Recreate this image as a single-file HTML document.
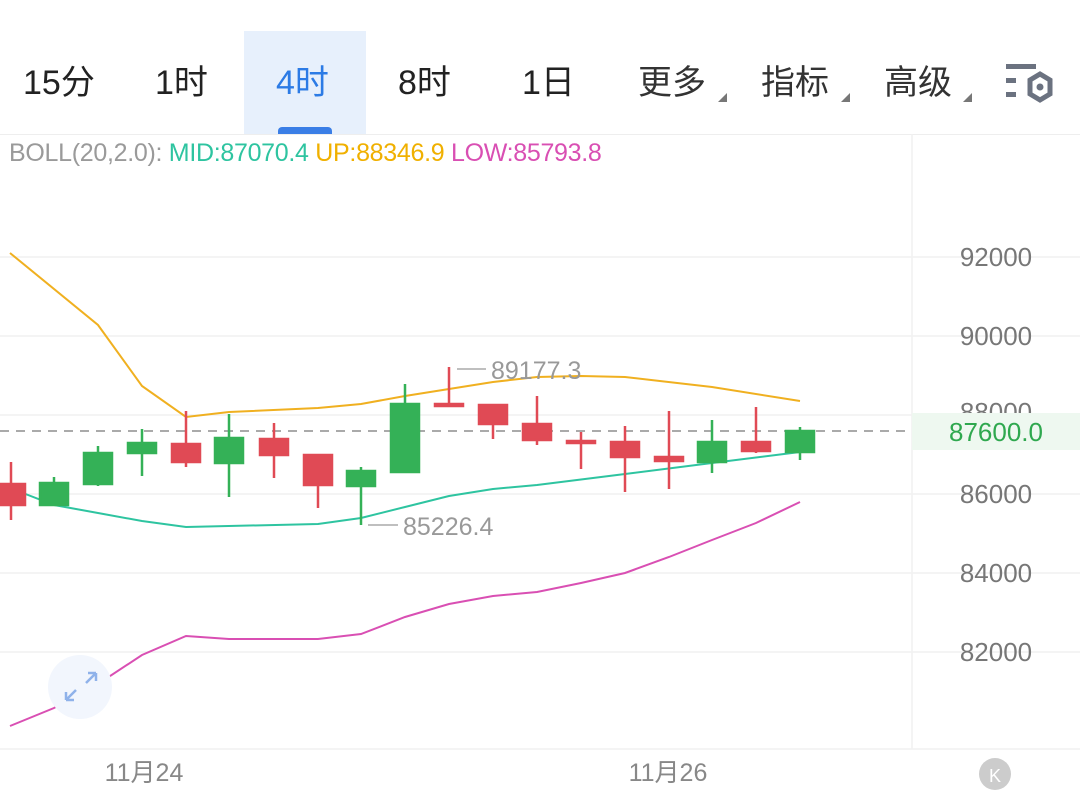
<!DOCTYPE html>
<html><head><meta charset="utf-8"><style>
html,body{margin:0;padding:0;background:#fff;width:1080px;height:797px;overflow:hidden;font-family:"Liberation Sans","Noto Sans CJK SC",sans-serif}
.tab{position:absolute;top:61px;font-size:34px;color:#222;line-height:44px}
.tri{position:absolute;width:0;height:0;border-left:9px solid transparent;border-bottom:9px solid #777}
svg text{font-family:"Liberation Sans","Noto Sans CJK SC",sans-serif}
</style></head><body>
<div style="position:absolute;left:244px;top:31px;width:122px;height:103px;background:#e7f0fc"></div>
<div style="position:absolute;left:278px;top:127px;width:54px;height:8px;border-radius:4px 4px 0 0;background:#3a7ee6"></div>
<div class="tab" style="left:23px">15分</div>
<div class="tab" style="left:155px">1时</div>
<div class="tab" style="left:276px;color:#2c7be5">4时</div>
<div class="tab" style="left:398px">8时</div>
<div class="tab" style="left:522px">1日</div>
<div class="tab" style="left:638px;color:#333">更多</div><div class="tri" style="left:718px;top:93px"></div>
<div class="tab" style="left:761px;color:#333">指标</div><div class="tri" style="left:841px;top:93px"></div>
<div class="tab" style="left:884px;color:#333">高级</div><div class="tri" style="left:963px;top:93px"></div>
<svg style="position:absolute;left:1004px;top:62px" width="52" height="42" viewBox="0 0 52 42">
<rect x="2" y="2" width="30" height="5" fill="#6b7280"/><rect x="2" y="16" width="10" height="5" fill="#6b7280"/><rect x="2" y="30" width="10" height="5" fill="#6b7280"/>
<polygon points="36,12 46,18 46,32 36,38 26,32 26,18" fill="none" stroke="#6b7280" stroke-width="5"/><circle cx="36" cy="25" r="3.5" fill="#6b7280"/>
</svg>
<div style="position:absolute;left:0;top:134px;width:1080px;height:1px;background:#eee"></div>
<div style="position:absolute;left:9px;top:138px;font-size:25px;line-height:30px;white-space:nowrap;letter-spacing:-0.3px"><span style="color:#9a9a9a">BOLL(20,2.0):</span> <span style="color:#2ec4a0">MID:87070.4</span> <span style="color:#f0b000">UP:88346.9</span> <span style="color:#d94fb3">LOW:85793.8</span></div>
<svg style="position:absolute;left:0;top:0" width="1080" height="797">
<g stroke="#f1f1f1" stroke-width="1.5">
<line x1="0" y1="257" x2="1080" y2="257"/><line x1="0" y1="336" x2="1080" y2="336"/><line x1="0" y1="415" x2="1080" y2="415"/><line x1="0" y1="494" x2="1080" y2="494"/><line x1="0" y1="573" x2="1080" y2="573"/><line x1="0" y1="652" x2="1080" y2="652"/>
<line x1="912" y1="134" x2="912" y2="749"/><line x1="0" y1="749" x2="1080" y2="749"/></g>
<g font-size="26" fill="#777" text-anchor="middle">
<text x="996" y="266">92000</text><text x="996" y="345">90000</text><text x="996" y="421">88000</text><text x="996" y="503">86000</text><text x="996" y="582">84000</text><text x="996" y="661">82000</text></g>
<rect x="912" y="413" width="168" height="37" fill="#eef8f0"/>
<text x="996" y="441" font-size="26" fill="#2fa84f" text-anchor="middle">87600.0</text>
<line x1="0" y1="431" x2="912" y2="431" stroke="#aaa" stroke-width="2" stroke-dasharray="9,7"/>
<polyline fill="none" stroke="#f0b020" stroke-width="2" points="10,253 98,325 142,386 186,417 229,412 318,408 361,404 405,396 493,382 537,377 581,376 625,377 712,387 800,401"/>
<polyline fill="none" stroke="#2ec4a0" stroke-width="2" points="10,488 54,505 98,513 142,521 186,527 318,524 361,518 405,507 449,496 493,489 537,485 625,474 712,463 800,452"/>
<polyline fill="none" stroke="#d94fb3" stroke-width="2" points="10,726 54,708 98,684 142,655 186,636 229,639 318,639 361,634 405,617 449,604 493,596 537,592 581,583 625,573 669,557 712,540 756,523 800,502"/>
<g stroke-width="2.5">
<g stroke="#e04a55" fill="#e04a55">
<line x1="11" y1="462" x2="11" y2="520"/><rect x="-3" y="484" width="28" height="21"/>
<line x1="186" y1="411" x2="186" y2="467"/><rect x="172" y="444" width="28" height="18"/>
<line x1="274" y1="423" x2="274" y2="478"/><rect x="260" y="439" width="28" height="16"/>
<line x1="318" y1="455" x2="318" y2="508"/><rect x="304" y="455" width="28" height="30"/>
<line x1="449" y1="367" x2="449" y2="406"/><rect x="435" y="404" width="28" height="2"/>
<line x1="493" y1="405" x2="493" y2="439"/><rect x="479" y="405" width="28" height="19"/>
<line x1="537" y1="396" x2="537" y2="445"/><rect x="523" y="424" width="28" height="16"/>
<line x1="581" y1="432" x2="581" y2="469"/><rect x="567" y="441" width="28" height="2"/>
<line x1="625" y1="426" x2="625" y2="492"/><rect x="611" y="442" width="28" height="15"/>
<line x1="669" y1="411" x2="669" y2="489"/><rect x="655" y="457" width="28" height="4"/>
<line x1="756" y1="407" x2="756" y2="453"/><rect x="742" y="442" width="28" height="9"/>
</g>
<g stroke="#34b157" fill="#34b157">
<line x1="54" y1="477" x2="54" y2="505"/><rect x="40" y="483" width="28" height="22"/>
<line x1="98" y1="446" x2="98" y2="486"/><rect x="84" y="453" width="28" height="31"/>
<line x1="142" y1="429" x2="142" y2="476"/><rect x="128" y="443" width="28" height="10"/>
<line x1="229" y1="414" x2="229" y2="497"/><rect x="215" y="438" width="28" height="25"/>
<line x1="361" y1="467" x2="361" y2="525"/><rect x="347" y="471" width="28" height="15"/>
<line x1="405" y1="384" x2="405" y2="472"/><rect x="391" y="404" width="28" height="68"/>
<line x1="712" y1="420" x2="712" y2="473"/><rect x="698" y="442" width="28" height="20"/>
<line x1="800" y1="427" x2="800" y2="460"/><rect x="786" y="431" width="28" height="21"/>
</g></g>
<line x1="457" y1="369" x2="486" y2="369" stroke="#aaa" stroke-width="1.5"/>
<text x="491" y="379" font-size="25" fill="#999">89177.3</text>
<line x1="368" y1="525" x2="398" y2="525" stroke="#aaa" stroke-width="1.5"/>
<text x="403" y="535" font-size="25" fill="#999">85226.4</text>
<circle cx="80" cy="687" r="32" fill="#f2f6fd"/>
<g stroke="#8fb2ea" stroke-width="2.5" fill="none"><path d="M66 700 L76 690 M66 700 L66 692 M66 700 L74 700"/><path d="M96 673 L86 683 M96 673 L88 673 M96 673 L96 681"/></g>
<g font-size="25" fill="#888" text-anchor="middle"><text x="144" y="781">11月24</text><text x="668" y="781">11月26</text></g>
<circle cx="995" cy="774" r="16" fill="#ccc"/>
<text x="995" y="782" font-size="18" fill="#fff" text-anchor="middle">K</text>
</svg>
</body></html>
